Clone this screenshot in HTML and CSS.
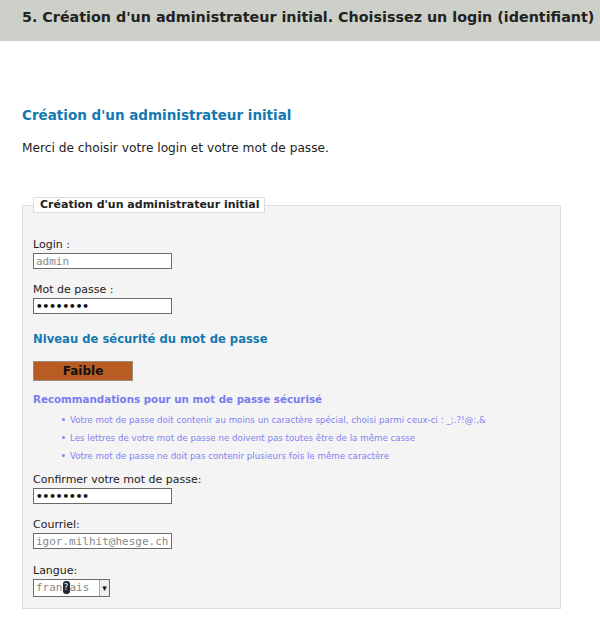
FILE: index.html
```html
<!DOCTYPE html>
<html lang="fr">
<head>
<meta charset="utf-8">
<title>Installation</title>
<link rel="stylesheet" href="styles.css">
</head>
<body>
<div class="topbar">
  <h1 class="step-title">5. Création d'un administrateur initial. Choisissez un login (identifiant)</h1>
</div>
<div class="content">
  <h2 class="section-title">Création d'un administrateur initial</h2>
  <p class="intro">Merci de choisir votre login et votre mot de passe.</p>
  <fieldset class="box">
    <legend class="box-legend">Création d'un administrateur initial</legend>
    <div class="field first">
      <label class="lbl">Login :</label>
      <input class="txt light" type="text" value="admin">
    </div>
    <div class="field">
      <label class="lbl">Mot de passe :</label>
      <input class="txt pwd" type="password" value="abcdefgh">
    </div>
    <h3 class="level-title">Niveau de sécurité du mot de passe</h3>
    <div class="strength">Faible</div>
    <h4 class="reco-title">Recommandations pour un mot de passe sécurisé</h4>
    <ul class="reco-list">
      <li>Votre mot de passe doit contenir au moins un caractère spécial, choisi parmi ceux-ci : _;.?!@:,&amp;</li>
      <li>Les lettres de votre mot de passe ne doivent pas toutes être de la même casse</li>
      <li>Votre mot de passe ne doit pas contenir plusieurs fois le même caractère</li>
    </ul>
    <div class="field after-list">
      <label class="lbl">Confirmer votre mot de passe:</label>
      <input class="txt pwd" type="password" value="abcdefgh">
    </div>
    <div class="field">
      <label class="lbl">Courriel:</label>
      <input class="txt light" type="text" value="igor.milhit@hesge.ch">
    </div>
    <div class="field lang">
      <label class="lbl">Langue:</label>
      <div class="select">
        <span class="select-val">fran<span class="bad">?</span>ais</span>
        <span class="select-btn">▾</span>
      </div>
    </div>
  </fieldset>
</div>
</body>
</html>
```
FILE: styles.css
```css
html, body {
  margin: 0;
  padding: 0;
  background: #ffffff;
  font-family: "DejaVu Sans", Verdana, sans-serif;
  color: #222222;
}
.topbar {
  background: #cdd0c8;
  height: 41px;
  padding-left: 22px;
  overflow: hidden;
  white-space: nowrap;
}
.step-title {
  margin: 0;
  font-size: 14.3px;
  line-height: 35px;
  font-weight: bold;
  color: #222222;
}
.content {
  padding: 0 0 0 22px;
}
.section-title {
  margin: 65px 0 0 0;
  font-size: 13.5px;
  line-height: 18px;
  font-weight: bold;
  color: #1479b0;
}
.intro {
  margin: 16px 0 0 0;
  font-size: 12.2px;
  line-height: 16px;
  color: #222222;
}
.box {
  margin: 41px 0 0 0;
  width: 539px;
  box-sizing: border-box;
  padding: 0 10px 11px 10px;
  border: 1px solid #dcdcdc;
  background: #f4f4f4;
}
.box-legend {
  background: #ffffff;
  border: 1px solid #dcdcdc;
  padding: 0 4px 0 6px;
  margin-left: 0;
  font-size: 11px;
  font-weight: bold;
  line-height: 14px;
  color: #222222;
}
.field {
  display: flex;
  flex-direction: column;
  align-items: flex-start;
  margin-top: 13px;
}
.field.first {
  margin-top: 24px;
}
.field.after-list {
  margin-top: 7px;
}
.field.lang {
  margin-top: 14px;
}
.lbl {
  font-size: 11px;
  line-height: 16px;
  color: #222222;
}
.txt {
  margin: 0;
  width: 139px;
  height: 16px;
  box-sizing: border-box;
  border: 1px solid #6b6b6b;
  background: #ffffff;
  padding: 0 2px;
  font-family: "DejaVu Sans Mono", monospace;
  font-size: 11px;
  color: #222222;
  outline: none;
}
.txt.pwd {
  font-weight: bold;
  color: #111111;
}
.txt.light {
  color: #888888;
}
.level-title {
  margin: 17px 0 0 0;
  font-size: 11.6px;
  line-height: 16px;
  font-weight: bold;
  color: #1479b0;
}
.strength {
  margin-top: 14px;
  width: 100px;
  height: 20px;
  box-sizing: border-box;
  border: 1px solid #9c8a7a;
  background: #b75c23;
  text-align: center;
  font-size: 12px;
  line-height: 18px;
  font-weight: bold;
  color: #111111;
}
.reco-title {
  margin: 10px 0 0 0;
  font-size: 10.3px;
  line-height: 16px;
  font-weight: bold;
  color: #7b7bef;
}
.reco-list {
  margin: 4px 0 0 0;
  padding: 0 0 0 37px;
  list-style: none;
  font-size: 8.7px;
  line-height: 18px;
  color: #8282f2;
}
.reco-list li::before {
  content: "";
  display: inline-block;
  width: 3px;
  height: 3px;
  border-radius: 50%;
  background: #8282f2;
  margin: 0 5px 2px -8px;
  vertical-align: middle;
}
.select {
  display: flex;
  width: 77px;
  height: 18px;
  box-sizing: border-box;
  border: 1px solid #6b6b6b;
  background: #ffffff;
}
.select-val {
  flex: 1;
  padding-left: 2px;
  font-family: "DejaVu Sans Mono", monospace;
  font-size: 11px;
  line-height: 16px;
  color: #888888;
}
.bad {
  display: inline-block;
  width: 7px;
  height: 13px;
  border-radius: 3px;
  background: #1c2a3a;
  color: #ffffff;
  font-size: 8px;
  line-height: 13px;
  text-align: center;
  vertical-align: text-bottom;
}
.select-btn {
  width: 9px;
  border-left: 1px solid #aaaaaa;
  background: #eeeeee;
  font-size: 9px;
  line-height: 16px;
  text-align: center;
  color: #111111;
}
```
